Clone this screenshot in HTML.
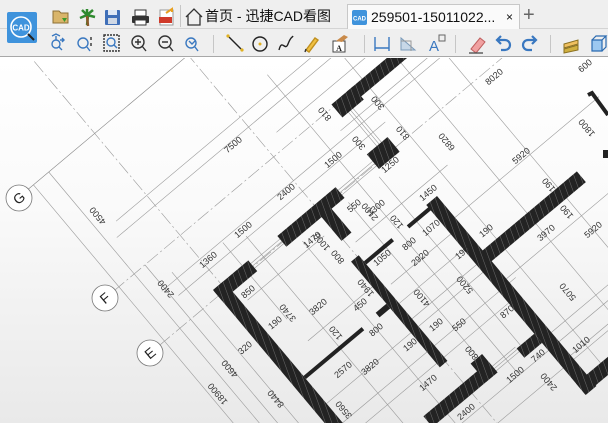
<!DOCTYPE html>
<html><head><meta charset="utf-8"><style>
*{margin:0;padding:0;box-sizing:border-box}
html,body{width:608px;height:423px;overflow:hidden}
body{font-family:"Liberation Sans","Noto Sans CJK SC",sans-serif;background:#fff;position:relative}
#top{position:absolute;left:0;top:0;width:608px;height:57px;background:#efefef;border-bottom:1px solid #a8a8a8;overflow:hidden}
#tabrow{position:absolute;left:0;top:0;width:608px;height:29px;border-bottom:1px solid #d4d4d4}
.logo{position:absolute;left:7px;top:12px;width:30px;height:31px;background:#3f93dc;border-radius:2px}
.tab{position:absolute;top:4px;height:25px;font-size:14px;color:#111;line-height:25px;overflow:hidden;white-space:nowrap}
.t1{left:182px;width:162px}
.t2{left:347px;width:173px;background:#fafafa;border:1px solid #c8c8c8;border-bottom:none}
.ic{position:absolute}
.sep{position:absolute;width:1px;background:#c6c6c6}
#cv{position:absolute;left:0;top:58px;width:608px;height:365px;overflow:hidden;background:linear-gradient(#fff 0%,#fafafa 40%,#e9e9e9 100%)}
svg text{font-family:"Liberation Sans",sans-serif;font-size:9px;fill:#333}
</style></head><body>
<div id="cv">
<svg width="608" height="365" viewBox="0 58 608 365" style="position:absolute;left:0;top:0">
<defs>
<pattern id="h" width="6" height="6" patternUnits="userSpaceOnUse" patternTransform="rotate(20)">
<rect width="6" height="6" fill="#232323"/><line x1="0" y1="0" x2="0" y2="6" stroke="#8a8a8a" stroke-width="0.7"/>
</pattern>
</defs>
<g transform="translate(213,290) rotate(-40)" stroke="#9a9a9a" stroke-width="0.6" fill="none">
<line x1="-77" y1="-196" x2="260" y2="-196" stroke="#888"/>
<line x1="-77" y1="-63" x2="400" y2="-63" stroke="#999" stroke-dasharray="14 3 2 3"/>
<line x1="-77" y1="8" x2="420" y2="8" stroke="#999" stroke-dasharray="14 3 2 3"/>
<line x1="10" y1="-290" x2="10" y2="330" stroke="#999" stroke-dasharray="14 3 2 3"/>
<line x1="132" y1="-200" x2="132" y2="330" stroke="#999" stroke-dasharray="14 3 2 3"/>
<line x1="-70" y1="-196" x2="-70" y2="420"/>
<line x1="-50" y1="-196" x2="-50" y2="420"/>
<line x1="-36" y1="-63" x2="-36" y2="420"/>
<line x1="-20" y1="-40" x2="-20" y2="420"/>
<line x1="-40" y1="-102" x2="320" y2="-102"/>
<line x1="-40" y1="-32" x2="330" y2="-32"/>
<line x1="-30" y1="-18" x2="240" y2="-18"/>
<line x1="-30" y1="-115" x2="420" y2="-115"/>
<line x1="150" y1="-80" x2="420" y2="-80"/>
<line x1="200" y1="-40" x2="420" y2="-40"/>
<line x1="20" y1="30" x2="120" y2="30"/>
<line x1="40" y1="100" x2="124" y2="100"/>
<line x1="14" y1="160" x2="220" y2="160"/>
<line x1="14" y1="185" x2="240" y2="185"/>
<line x1="14" y1="200" x2="218" y2="200"/>
<line x1="140" y1="55" x2="260" y2="55"/>
<line x1="140" y1="110" x2="218" y2="110"/>
<line x1="134" y1="130" x2="218" y2="130"/>
<line x1="134" y1="150" x2="218" y2="150"/>
<line x1="232" y1="100" x2="420" y2="100"/>
<line x1="232" y1="180" x2="420" y2="180"/>
<line x1="232" y1="250" x2="420" y2="250"/>
<line x1="232" y1="280" x2="420" y2="280"/>
<line x1="80" y1="262" x2="300" y2="262"/>
<line x1="60" y1="285" x2="300" y2="285"/>
<line x1="180" y1="-130" x2="180" y2="260"/>
<line x1="250" y1="-140" x2="250" y2="330"/>
<line x1="290" y1="-140" x2="290" y2="340"/>
<line x1="330" y1="-120" x2="330" y2="340"/>
<line x1="60" y1="-20" x2="60" y2="320"/>
<line x1="100" y1="20" x2="100" y2="320"/>
<line x1="160" y1="20" x2="160" y2="230"/>
<line x1="200" y1="20" x2="200" y2="240"/>
<line x1="38" y1="-30" x2="38" y2="70"/>
<g stroke="#999" stroke-width="0.6">
<line x1="46" y1="4" x2="84" y2="4"/><line x1="46" y1="7" x2="84" y2="7"/><line x1="46" y1="10" x2="84" y2="10"/>
<line x1="160" y1="4" x2="205" y2="4"/><line x1="160" y1="7" x2="205" y2="7"/><line x1="160" y1="10" x2="205" y2="10"/>
<line x1="218" y1="-50" x2="218" y2="-5"/><line x1="221" y1="-50" x2="221" y2="-5"/><line x1="224" y1="-50" x2="224" y2="-5"/>
<line x1="165" y1="238" x2="195" y2="238"/><line x1="165" y1="241" x2="195" y2="241"/><line x1="165" y1="244" x2="195" y2="244"/>
</g>
<g fill="url(#h)" stroke="none">
<rect x="0" y="0" width="14" height="260"/>
<rect x="0" y="0" width="46" height="14"/>
<rect x="84" y="0" width="76" height="14"/>
<rect x="130" y="12" width="13" height="33"/>
<rect x="205" y="-5" width="27" height="19"/>
<rect x="210" y="-66" width="28" height="17"/>
<rect x="230" y="-66" width="140" height="13"/>
<rect x="124" y="67" width="10" height="138"/>
<rect x="218" y="72" width="14" height="248"/>
<rect x="220" y="143" width="135" height="14"/>
<rect x="218" y="305" width="90" height="14"/>
<rect x="195" y="240" width="23" height="12"/>
<rect x="80" y="232" width="85" height="14"/>
<rect x="150" y="222" width="15" height="24"/>
</g>
<g fill="#222" stroke="none">
<rect x="14" y="124" width="76" height="4"/>
<rect x="110" y="122" width="14" height="6"/>
<rect x="134" y="75" width="36" height="4"/>
<rect x="190" y="75" width="30" height="4"/>
</g>
</g>
<polyline points="588,95 592,93 608,115" stroke="#222" stroke-width="4" fill="none"/>
<rect x="603" y="150" width="5" height="8" fill="#222"/>
<g fill="#fff" stroke="#777" stroke-width="0.8">
<circle cx="19" cy="198" r="13"/><circle cx="105" cy="298" r="13"/><circle cx="150" cy="353" r="13"/>
</g>
<text x="19" y="203" text-anchor="middle" transform="rotate(-40 19 198)" style="font-size:14px;fill:#222">G</text>
<text x="105" y="303" text-anchor="middle" transform="rotate(-40 105 298)" style="font-size:14px;fill:#222">F</text>
<text x="150" y="358" text-anchor="middle" transform="rotate(-40 150 353)" style="font-size:14px;fill:#222">E</text>
<g text-anchor="middle">
<text transform="translate(235,147) rotate(-40)">7500</text>
<text transform="translate(288,194) rotate(-40)">2400</text>
<text transform="translate(245,232) rotate(-40)">1500</text>
<text transform="translate(210,262) rotate(-40)">1360</text>
<text transform="translate(335,162) rotate(-40)">1500</text>
<text transform="translate(392,167) rotate(-40)">1250</text>
<text transform="translate(378,210) rotate(-40)">3300</text>
<text transform="translate(430,195) rotate(-40)">1450</text>
<text transform="translate(356,208) rotate(-40)">550</text>
<text transform="translate(314,242) rotate(-40)">1470</text>
<text transform="translate(433,230) rotate(-40)">1070</text>
<text transform="translate(411,246) rotate(-40)">800</text>
<text transform="translate(384,260) rotate(-40)">1050</text>
<text transform="translate(422,260) rotate(-40)">2920</text>
<text transform="translate(488,233) rotate(-40)">190</text>
<text transform="translate(464,255) rotate(-40)">190</text>
<text transform="translate(250,294) rotate(-40)">850</text>
<text transform="translate(277,325) rotate(-40)">190</text>
<text transform="translate(320,309) rotate(-40)">3820</text>
<text transform="translate(362,307) rotate(-40)">450</text>
<text transform="translate(378,332) rotate(-40)">800</text>
<text transform="translate(345,372) rotate(-40)">2570</text>
<text transform="translate(372,369) rotate(-40)">3820</text>
<text transform="translate(412,347) rotate(-40)">190</text>
<text transform="translate(438,327) rotate(-40)">190</text>
<text transform="translate(461,327) rotate(-40)">550</text>
<text transform="translate(430,385) rotate(-40)">1470</text>
<text transform="translate(468,414) rotate(-40)">2400</text>
<text transform="translate(517,377) rotate(-40)">1500</text>
<text transform="translate(540,358) rotate(-40)">740</text>
<text transform="translate(583,347) rotate(-40)">1010</text>
<text transform="translate(509,314) rotate(-40)">870</text>
<text transform="translate(496,79) rotate(-40)">8020</text>
<text transform="translate(523,158) rotate(-40)">5920</text>
<text transform="translate(548,235) rotate(-40)">3970</text>
<text transform="translate(595,232) rotate(-40)">5920</text>
<text transform="translate(587,68) rotate(-40)">600</text>
<text transform="translate(247,350) rotate(-40)">320</text>
<text transform="translate(100,214) rotate(-130)">4500</text>
<text transform="translate(168,287) rotate(-130)">2400</text>
<text transform="translate(232,367) rotate(-130)">4600</text>
<text transform="translate(220,392) rotate(-130)">18900</text>
<text transform="translate(278,397) rotate(-130)">8440</text>
<text transform="translate(346,408) rotate(-130)">3560</text>
<text transform="translate(290,311) rotate(-130)">3740</text>
<text transform="translate(324,240) rotate(-130)">1000</text>
<text transform="translate(372,210) rotate(-130)">2100</text>
<text transform="translate(399,220) rotate(-130)">120</text>
<text transform="translate(368,286) rotate(-130)">1940</text>
<text transform="translate(424,296) rotate(-130)">4100</text>
<text transform="translate(467,283) rotate(-130)">5200</text>
<text transform="translate(474,351) rotate(-130)">800</text>
<text transform="translate(570,290) rotate(-130)">5070</text>
<text transform="translate(551,380) rotate(-130)">2400</text>
<text transform="translate(449,140) rotate(-130)">6820</text>
<text transform="translate(327,112) rotate(-130)">810</text>
<text transform="translate(380,101) rotate(-130)">300</text>
<text transform="translate(361,141) rotate(-130)">300</text>
<text transform="translate(405,131) rotate(-130)">810</text>
<text transform="translate(551,183) rotate(-130)">190</text>
<text transform="translate(569,210) rotate(-130)">190</text>
<text transform="translate(589,126) rotate(-130)">1800</text>
<text transform="translate(340,255) rotate(-130)">800</text>
<text transform="translate(338,331) rotate(-130)">120</text>
</g>
</svg>
</div>
<div id="top">
<div id="tabrow"></div>
<div class="logo"><svg width="30" height="31"><circle cx="14" cy="15" r="10" fill="none" stroke="#fff" stroke-width="1.6"/><text x="14" y="18.5" text-anchor="middle" style="font:bold 8px 'Liberation Sans';fill:#fff">CAD</text><line x1="21" y1="22" x2="27" y2="28" stroke="#222" stroke-width="2"/></svg></div>
<svg class="ic" style="left:50px;top:5px" width="130" height="22">
<path d="M3 6h6l2 2h7v10H3z" fill="#d9b56a" stroke="#8d7035"/><path d="M12 13h5l-2.5 4z" fill="#3a9a2a"/>
<path d="M37 20l1-9M37 10l-7 3M37 10l8 2M37 10l-5-5M37 10l6-5M37 10l0-6" stroke="#2f8a2f" stroke-width="2.5" fill="none"/><path d="M37 11l1 10" stroke="#8b5a2b" stroke-width="2.5"/>
<rect x="55" y="5" width="15" height="15" fill="#3f6fb8" rx="1"/><rect x="58" y="5" width="9" height="5" fill="#dfe8f5"/><rect x="58" y="13" width="9" height="6" fill="#cfd8e5"/>
<rect x="82" y="11" width="17" height="7" fill="#333" rx="1"/><rect x="85" y="5" width="11" height="6" fill="#fff" stroke="#333"/><rect x="85" y="15" width="11" height="5" fill="#fff" stroke="#333"/>
<rect x="110" y="5" width="13" height="15" fill="#fff" stroke="#999"/><rect x="109" y="12" width="13" height="6" fill="#d03a2a"/><path d="M116 8l6-4v3" stroke="#e8a020" stroke-width="2" fill="none"/>
</svg>
<div class="sep" style="left:180px;top:5px;height:22px"></div>
<div class="tab t1"><svg style="position:absolute;left:2px;top:3px" width="20" height="20"><path d="M2 10L10 2l8 8M4 8v10h12V8" fill="none" stroke="#333" stroke-width="1.3"/></svg><span style="position:absolute;left:23px">首页 - 迅捷CAD看图</span></div>
<div class="tab t2"><svg style="position:absolute;left:4px;top:5px" width="15" height="15"><rect width="15" height="15" rx="2" fill="#3f93dc"/><text x="7.5" y="10.5" text-anchor="middle" style="font:bold 6px 'Liberation Sans';fill:#fff">CAD</text></svg><span style="position:absolute;left:23px">259501-15011022...</span><span style="position:absolute;left:158px;font-size:12px">×</span></div>
<div style="position:absolute;left:523px;top:3px;font-size:20px;color:#666;line-height:24px">+</div>
<svg class="ic" style="left:46px;top:32px" width="562" height="24" fill="none" stroke-width="1.4">
<g stroke="#3a78c0"><circle cx="10" cy="12" r="4"/><path d="M13 15l3 3M10 4v4M6 4l4-2 4 2M18 8h-4M16 6l2 2-2 2"/></g>
<g stroke="#3a78c0"><circle cx="37" cy="11" r="5"/><path d="M41 15l3 4"/><path d="M45 5v3M45 11v3" stroke="#333"/></g>
<g><rect x="58" y="3" width="15" height="16" stroke="#333" stroke-dasharray="2 1"/><circle cx="65" cy="10" r="4" stroke="#3a78c0"/><path d="M68 13l3 3" stroke="#3a78c0"/></g>
<g stroke="#333"><circle cx="92" cy="10" r="6"/><path d="M89 10h6M92 7v6M96 14l4 5"/></g>
<g stroke="#333"><circle cx="119" cy="10" r="6"/><path d="M116 10h6M123 14l4 5"/></g>
<g stroke="#3a78c0"><circle cx="145" cy="11" r="5"/><path d="M149 15l3 4M143 9l3 3 3-3"/></g>
<g stroke="#222"><path d="M182 4l14 14"/><circle cx="182" cy="4" r="1.6" fill="#e0b020" stroke="none"/><circle cx="196" cy="18" r="1.6" fill="#e0b020" stroke="none"/></g>
<g stroke="#222"><circle cx="214" cy="12" r="7"/><circle cx="214" cy="12" r="1.5" fill="#e0b020" stroke="none"/></g>
<g stroke="#222"><path d="M233 18c3-12 6 2 9-6s4-6 5-8"/></g>
<g><path d="M260 18l9-12 3 2-9 12z" fill="#f0c040" stroke="#c09020"/><path d="M259 20l1-3" stroke="#333"/></g>
<g><rect x="287" y="9" width="12" height="11" fill="#fff" stroke="#444" stroke-width="1"/><text x="293" y="19" text-anchor="middle" style="font:bold 8px 'Liberation Serif';fill:#222;stroke:none">A</text><path d="M290 9l8-6 4 2-6 5z" fill="#c98a4a" stroke="none"/></g>
<g stroke="#3a78c0"><path d="M329 5v14M343 5v14M329 16h14"/></g>
<g><path d="M355 18V6l14 12z" fill="#c8d8e8" stroke="#7a9ab8" stroke-width="1"/><path d="M355 9h10v10" stroke="#999" stroke-width="1"/></g>
<g><text x="388" y="19" text-anchor="middle" style="font:15px 'Liberation Sans';fill:#3a78c0;stroke:none">A</text><rect x="393" y="3" width="6" height="6" stroke="#666" stroke-width="1"/></g>
<g><path d="M425 17l9-11 5 4-9 11z" fill="#f0a0a0" stroke="#c06060" stroke-width="1"/><path d="M423 21h14" stroke="#555"/></g>
<g stroke="#3a78c0" stroke-width="2.2"><path d="M452 8h7a5 5 0 010 10h-4M455 4l-4 4 4 4"/></g>
<g stroke="#3a78c0" stroke-width="2.2"><path d="M489 8h-7a5 5 0 000 10h4M486 4l4 4-4 4"/></g>
<g><path d="M518 17l14-4v5l-14 3z" fill="#d0b040" stroke="#8a7020" stroke-width="1"/><path d="M518 12l14-4v4l-14 4z" fill="#f0c060" stroke="#8a7020" stroke-width="1"/></g>
<g stroke="#2a6ab0" stroke-width="1.2"><path d="M546 8h10v11h-10z" fill="#9cc8f0"/><path d="M546 8l4-4h10l-4 4M560 4v11l-4 4"/></g>
</svg>
<div class="sep" style="left:213px;top:35px;height:18px"></div>
<div class="sep" style="left:364px;top:35px;height:18px"></div>
<div class="sep" style="left:455px;top:35px;height:18px"></div>
<div class="sep" style="left:550px;top:35px;height:18px"></div>
</div>
</body></html>
